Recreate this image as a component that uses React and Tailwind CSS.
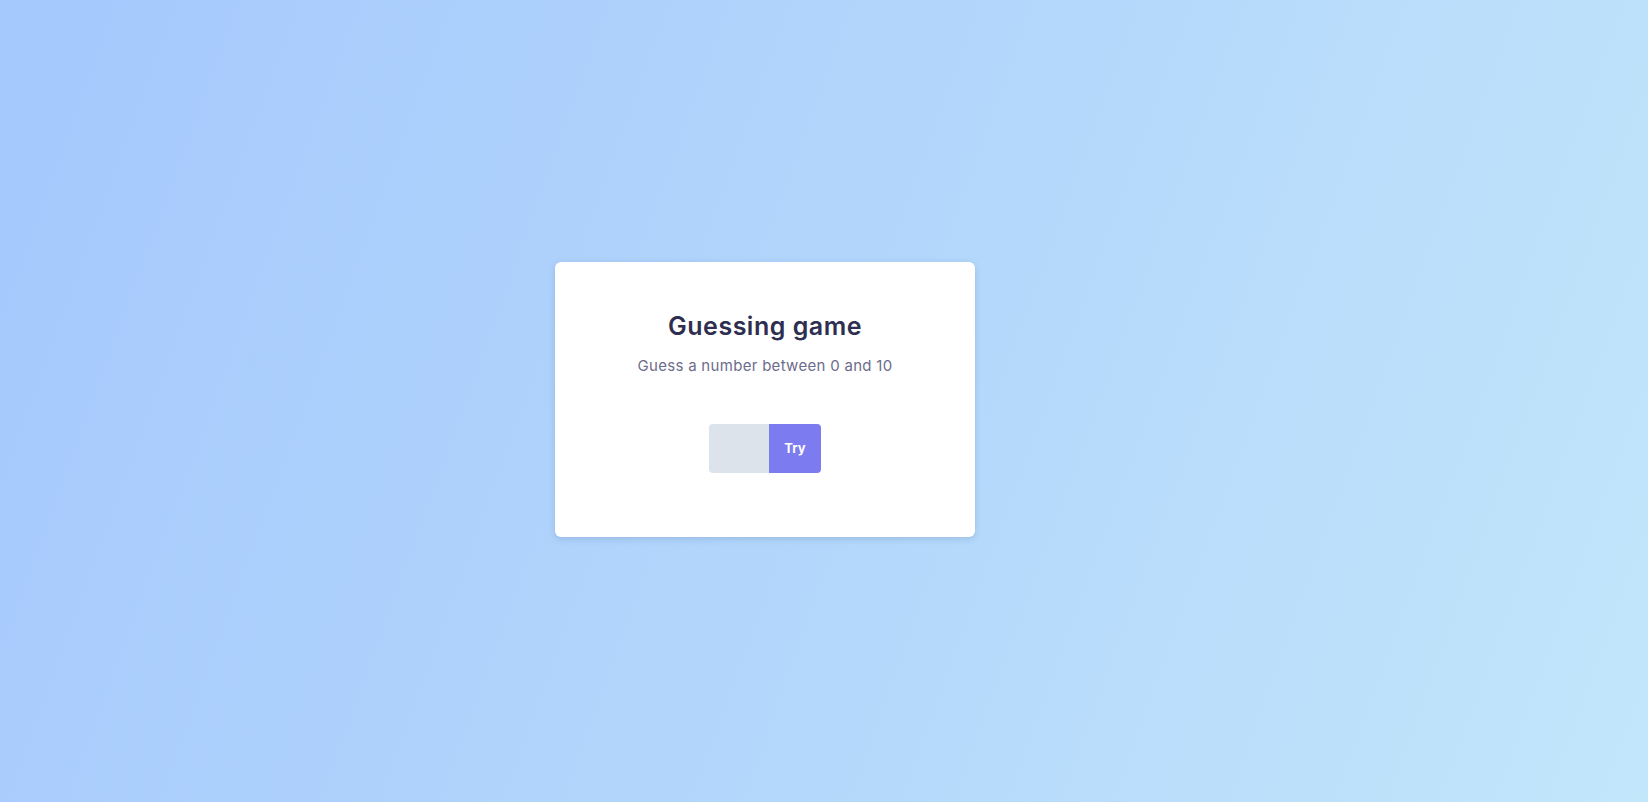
export default function App() {
  return (
    <div className="min-h-screen w-full flex items-center justify-center pr-[118px] pb-[3px] bg-[linear-gradient(110deg,#a5c8fd_0%,#b2d6fb_50%,#c2e6fa_100%)]">
      <div className="w-[420px] h-[275px] bg-white rounded-md shadow-[0_2px_6px_rgba(80,110,160,0.25)] flex flex-col items-center pt-[48px]">
        <h1 className="text-[25px] font-semibold text-[#2e2f50] font-['Inter',sans-serif] tracking-[0.5px] leading-8">
          Guessing game
        </h1>
        <p className="mt-[14px] text-[15px] text-[#6d6c8c] font-['Inter',sans-serif] tracking-[0.3px] leading-5">
          Guess a number between 0 and 10
        </p>
        <div className="mt-[48px] flex h-[49px] rounded-[4px] overflow-hidden">
          <input
            type="text"
            className="w-[60px] h-full bg-[#dce3ea] outline-none border-0 px-2 text-sm"
          />
          <button className="w-[52px] h-full bg-[#7c7cf0] text-white text-[13px] font-bold font-['Inter',sans-serif]">
            Try
          </button>
        </div>
      </div>
    </div>
  );
}
